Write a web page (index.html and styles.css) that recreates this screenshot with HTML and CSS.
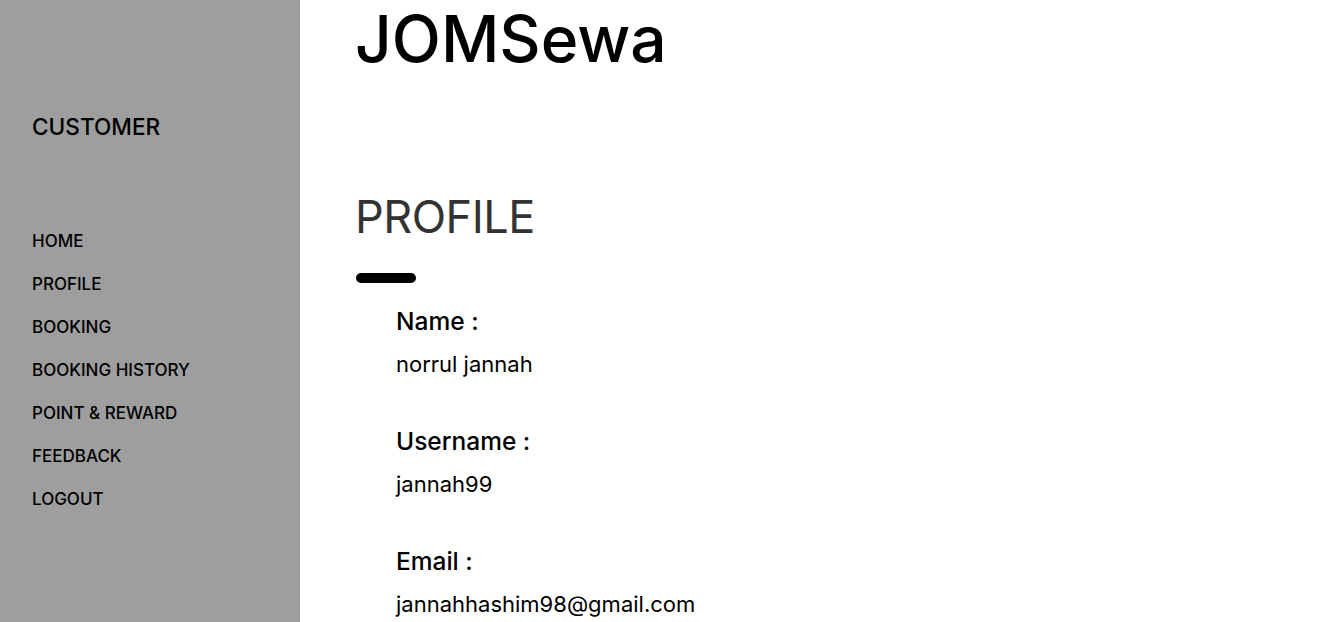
FILE: index.html
```html
<!DOCTYPE html>
<html lang="en">
<head>
<meta charset="utf-8">
<title>JOMSewa - Profile</title>
<link rel="stylesheet" href="styles.css">
</head>
<body>
<div class="layout">
  <aside class="sidebar">
    <h2 class="role">CUSTOMER</h2>
    <nav class="menu">
      <ul>
        <li><a href="#">HOME</a></li>
        <li><a href="#">PROFILE</a></li>
        <li><a href="#">BOOKING</a></li>
        <li><a href="#">BOOKING HISTORY</a></li>
        <li><a href="#">POINT &amp; REWARD</a></li>
        <li><a href="#">FEEDBACK</a></li>
        <li><a href="#">LOGOUT</a></li>
      </ul>
    </nav>
  </aside>
  <main class="content">
    <h1 class="brand">JOMSewa</h1>
    <h2 class="title">PROFILE</h2>
    <div class="bar"></div>
    <dl class="details">
      <div class="field">
        <dt>Name :</dt>
        <dd>norrul jannah</dd>
      </div>
      <div class="field">
        <dt>Username :</dt>
        <dd>jannah99</dd>
      </div>
      <div class="field">
        <dt>Email :</dt>
        <dd>jannahhashim98@gmail.com</dd>
      </div>
    </dl>
  </main>
</div>
</body>
</html>
```
FILE: styles.css
```css
* { box-sizing: border-box; }
html, body { margin: 0; padding: 0; }
body {
  font-family: "Inter", "Open Sans", sans-serif;
  color: #000;
  background: #fff;
  overflow: hidden;
}
.layout {
  display: grid;
  grid-template-columns: 300px 1fr;
  min-height: 100vh;
}
.sidebar {
  background: #9e9e9e;
  padding: 116px 0 0 32px;
}
.role {
  margin: 0;
  font-size: 22.6px;
  line-height: 22px;
  font-weight: 500;
  color: #000;
}
.menu { margin-top: 82px; }
.menu ul { list-style: none; margin: 0; padding: 0; }
.menu li { line-height: 43px; }
.menu a {
  font-size: 17px;
  font-weight: 500;
  color: #000;
  text-decoration: none;
}
.content {
  padding: 7px 0 0 55px;
}
.brand {
  margin: 0;
  font-size: 64px;
  line-height: 64px;
  font-weight: 500;
  color: #000;
}
.title {
  margin: 123px 0 0;
  font-size: 45px;
  line-height: 45px;
  font-weight: 400;
  letter-spacing: -0.5px;
  color: #333;
}
.bar {
  margin-top: 34px;
  margin-left: 1px;
  width: 60px;
  height: 10px;
  border-radius: 5px;
  background: #000;
}
.details {
  margin: 26px 0 0 41px;
  display: flex;
  flex-direction: column;
  gap: 54px;
}
.field dt {
  font-size: 24.5px;
  line-height: 24px;
  font-weight: 500;
}
.field dd {
  margin: 20px 0 0;
  font-size: 22px;
  line-height: 22px;
  font-weight: 400;
}
```
